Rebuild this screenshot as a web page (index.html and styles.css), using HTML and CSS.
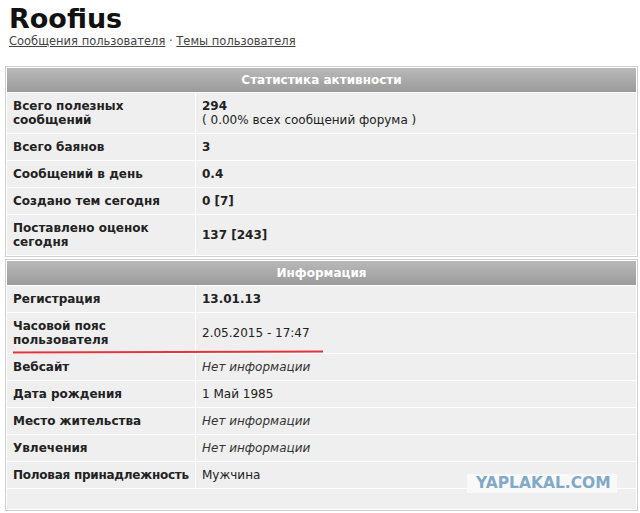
FILE: index.html
```html
<!DOCTYPE html>
<html lang="ru">
<head>
<meta charset="utf-8"/>
<title>Roofius - Профиль</title>
<link rel="stylesheet" href="styles.css">
</head>
<body>
<div class="page">
  <h1 class="nick">Roofius</h1>
  <div class="links">
    <a href="#">Сообщения пользователя</a> · <a href="#">Темы пользователя</a>
  </div>

  <div class="box">
    <table class="stats">
      <colgroup><col class="col-lbl"><col></colgroup>
      <tr><th colspan="2">Статистика активности</th></tr>
      <tr>
        <td class="lbl">Всего полезных сообщений</td>
        <td class="val"><b>294</b><br>( 0.00% всех сообщений форума )</td>
      </tr>
      <tr><td class="lbl">Всего баянов</td><td class="val"><b>3</b></td></tr>
      <tr><td class="lbl">Сообщений в день</td><td class="val"><b>0.4</b></td></tr>
      <tr><td class="lbl">Создано тем сегодня</td><td class="val"><b>0 [7]</b></td></tr>
      <tr><td class="lbl">Поставлено оценок сегодня</td><td class="val"><b>137 [243]</b></td></tr>
    </table>
  </div>

  <div class="box info">
    <table class="stats">
      <colgroup><col class="col-lbl"><col></colgroup>
      <tr><th colspan="2">Информация</th></tr>
      <tr><td class="lbl">Регистрация</td><td class="val"><b>13.01.13</b></td></tr>
      <tr><td class="lbl">Часовой пояс пользователя</td><td class="val">2.05.2015 - 17:47</td></tr>
      <tr><td class="lbl">Вебсайт</td><td class="val"><i>Нет информации</i></td></tr>
      <tr><td class="lbl">Дата рождения</td><td class="val">1 Май 1985</td></tr>
      <tr><td class="lbl">Место жительства</td><td class="val"><i>Нет информации</i></td></tr>
      <tr><td class="lbl">Увлечения</td><td class="val"><i>Нет информации</i></td></tr>
      <tr><td class="lbl nowrap">Половая принадлежность</td><td class="val">Мужчина</td></tr>
      <tr><td class="empty" colspan="2"></td></tr>
    </table>
    <!-- пометка маркером под часовым поясом -->
    <div class="mark"></div>
  </div>

  <div class="watermark">YAPLAKAL.COM</div>
</div>
</body>
</html>
```

FILE: styles.css
```css
body {
  margin: 0;
  background: #fff;
  font-family: "DejaVu Sans", Verdana, sans-serif;
  color: #222;
}
.page {
  position: relative;
  padding: 3px 0 0 5px;
  height: 510px;
}
.nick {
  margin: 0;
  padding-left: 4px;
  font-size: 27px;
  line-height: 31px;
  font-weight: bold;
  color: #111;
}
.links {
  padding-left: 4px;
  font-size: 11.5px;
  line-height: 15px;
  color: #444;
}
.links a {
  color: #444;
}
.box {
  width: 631px;
  margin-top: 17px;
  border: 1px solid #cfcfcf;
  background: #fff;
}
.box.info {
  position: relative;
  margin-top: 2px;
}
.stats {
  width: 100%;
  table-layout: fixed;
  border-collapse: separate;
  border-spacing: 1px;
  font-size: 12px;
  line-height: 14px;
}
.stats .col-lbl {
  width: 188px;
}
.stats th {
  height: 24px;
  padding: 0;
  background: linear-gradient(#b9b9b9, #9b9b9b);
  color: #fff;
  font-weight: bold;
  text-align: center;
}
.stats td {
  background: #efefef;
  padding: 6px;
  vertical-align: middle;
}
.stats .lbl {
  font-weight: bold;
}
.stats .nowrap {
  white-space: nowrap;
  padding-right: 0;
  letter-spacing: -0.25px;
}
.stats .val i {
  color: #333;
}
.stats .empty {
  height: 20px;
  padding: 0;
}
.mark {
  position: absolute;
  left: 7px;
  top: 91px;
  width: 310px;
  height: 2px;
  background: #e3343a;
  transform: rotate(-0.15deg);
}
.watermark {
  position: absolute;
  left: 467px;
  top: 474px;
  padding: 2px 6px 2px 9px;
  background: rgba(250, 250, 250, 0.85);
  color: #82a9c7;
  font-size: 15.5px;
  line-height: 15px;
  font-weight: bold;
}
```
